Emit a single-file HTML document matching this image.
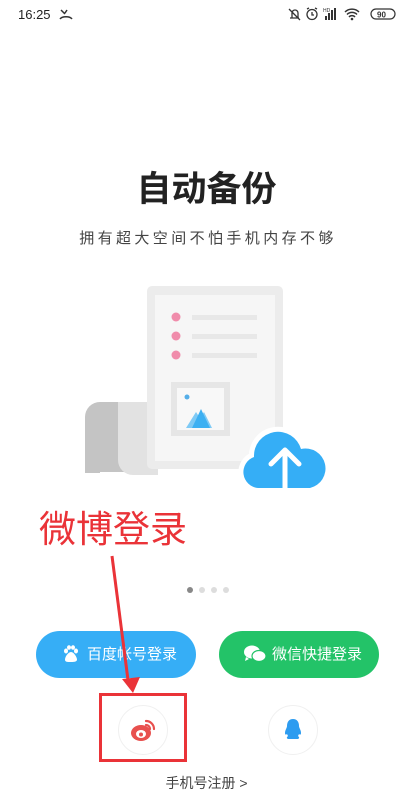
<!DOCTYPE html>
<html><head><meta charset="utf-8"><style>
*{margin:0;padding:0;box-sizing:border-box}
body{width:413px;height:805px;background:#fff;position:relative;overflow:hidden;font-family:"Liberation Sans","Noto Sans CJK SC",sans-serif}
.a{position:absolute}
</style></head><body>
<div class="a" style="left:18px;top:7px;font-size:13px;color:#222">16:25</div>
<svg class="a" style="left:58px;top:8px" width="16" height="14" viewBox="0 0 16 14"><path d="M3 2l4 4M9 2l-2 3M2 11c2-3 10-3 12 0" stroke="#333" stroke-width="1.5" fill="none"/></svg>
<svg class="a" style="left:287px;top:6px" width="110" height="16" viewBox="0 0 110 16">
<g stroke="#333" stroke-width="1.3" fill="none"><path d="M3 12h9M5 12V7a3 3 0 016 0v5M2 3l11 11"/><circle cx="25" cy="8.5" r="5"/><path d="M25 6v3h2M20 3l2-1M30 3l-2-1"/></g>
<g fill="#333"><rect x="38" y="10" width="2" height="4"/><rect x="41" y="7" width="2" height="7"/><rect x="44" y="4" width="2" height="10"/><rect x="47" y="2" width="2" height="12"/></g>
<text x="36" y="6" font-size="5" fill="#333">HD</text>
<path d="M58 6a10 10 0 0114 0M60 8.5a7 7 0 0110 0M62 11a4 4 0 016 0" stroke="#333" stroke-width="1.5" fill="none"/><circle cx="65" cy="13" r="1.3" fill="#333"/>
<rect x="84" y="3" width="24" height="10" rx="5" stroke="#333" stroke-width="1.2" fill="none"/><text x="90" y="11.5" font-size="8" font-weight="bold" fill="#333">90</text>
</svg>
<div class="a" style="left:0;width:413px;top:167px;text-align:center;font-size:35px;font-weight:bold;color:#222;line-height:46px">自动备份</div>
<div class="a" style="left:0;width:413px;top:228px;text-align:center;font-size:15px;letter-spacing:3.4px;padding-left:3px;color:#444;line-height:22px">拥有超大空间不怕手机内存不够</div>
<svg class="a" style="left:80px;top:280px" width="260" height="215" viewBox="80 280 260 215">
<path d="M100 402h50v70h-50z" fill="#c4c4c4"/><path d="M100 402a15 15 0 00-15 15v56h15z" fill="#c4c4c4"/>
<path d="M118 402h40v73h-25a15 15 0 01-15-15z" fill="#e2e2e2"/>
<rect x="147" y="286" width="136" height="183" rx="5" fill="#ececec"/>
<rect x="155" y="295" width="120" height="166" fill="#f6f6f6"/>
<circle cx="176" cy="317" r="4.5" fill="#f08cab"/><circle cx="176" cy="336" r="4.5" fill="#f08cab"/><circle cx="176" cy="355" r="4.5" fill="#f08cab"/>
<rect x="192" y="315" width="65" height="5" fill="#e8e8e8"/><rect x="192" y="334" width="65" height="5" fill="#e8e8e8"/><rect x="192" y="353" width="65" height="5" fill="#e8e8e8"/>
<rect x="171" y="382" width="59" height="54" fill="#e6e6e6"/><rect x="177" y="388" width="47" height="42" fill="#f8f8f8"/>
<circle cx="187" cy="397" r="2.5" fill="#55aee8"/>
<path d="M186 428l10-16 4 6 4-6 8 16z" fill="#7fcaf5"/><path d="M192 428l9-19 9 19z" fill="#3db0f2"/>
<path d="M258 488a16 16 0 01-4-31 24 24 0 0147-8 18 18 0 019 39z" fill="#35aef6" stroke="#fff" stroke-width="10" paint-order="stroke"/>
<path d="M285 488v-38M271 464l14-14 14 14" stroke="#fff" stroke-width="5" fill="none" stroke-linecap="round" stroke-linejoin="round"/>
</svg>
<div class="a" style="left:39px;top:505px;font-size:37px;color:#ea3338;line-height:50px;letter-spacing:0">微博登录</div>
<div class="a" style="left:187px;top:587px;width:6px;height:6px;border-radius:3px;background:#888"></div>
<div class="a" style="left:199px;top:587px;width:6px;height:6px;border-radius:3px;background:#ddd"></div>
<div class="a" style="left:211px;top:587px;width:6px;height:6px;border-radius:3px;background:#ddd"></div>
<div class="a" style="left:223px;top:587px;width:6px;height:6px;border-radius:3px;background:#ddd"></div>
<div class="a" style="left:36px;top:631px;width:160px;height:47px;border-radius:24px;background:#36aef6;color:#fff;font-size:15px;line-height:47px;padding-left:51px">百度帐号登录</div>
<svg class="a" style="left:63px;top:645px" width="16" height="18" viewBox="0 0 16 18" fill="#fff"><ellipse cx="3" cy="6" rx="2" ry="2.5"/><ellipse cx="6" cy="2.5" rx="2" ry="2.3"/><ellipse cx="10" cy="2.5" rx="2" ry="2.3"/><ellipse cx="13" cy="6" rx="2" ry="2.5"/><path d="M8 7c-3 0-6 5-6 7.5S4 17 8 17s6-.5 6-2.5S11 7 8 7z"/></svg>
<div class="a" style="left:219px;top:631px;width:160px;height:47px;border-radius:24px;background:#23c368;color:#fff;font-size:15px;line-height:47px;padding-left:53px">微信快捷登录</div>
<svg class="a" style="left:243px;top:645px" width="24" height="18" viewBox="0 0 24 18" fill="#fff"><ellipse cx="9" cy="7" rx="8" ry="6.5"/><path d="M3 12l-1 4 4-2z"/><ellipse cx="16" cy="11" rx="7" ry="5.5" stroke="#23c368" stroke-width="1.2"/></svg>
<svg class="a" style="left:0;top:545px" width="160" height="160" viewBox="0 545 160 160"><path d="M112 556L128 680" stroke="#ea3338" stroke-width="3"/><path d="M122 679l11 14 7-16z" fill="#ea3338"/></svg>
<div class="a" style="left:99px;top:693px;width:88px;height:69px;border:3px solid #ea3338"></div>
<div class="a" style="left:118px;top:705px;width:50px;height:50px;border-radius:25px;border:1px solid #f0f0f0"></div>
<svg class="a" style="left:130px;top:717px" width="28" height="26" viewBox="0 0 28 26"><ellipse cx="11" cy="16" rx="10" ry="8" fill="#e8504e"/><ellipse cx="11" cy="17" rx="5" ry="4" fill="#fff"/><circle cx="11" cy="17.5" r="2" fill="#e8504e"/><path d="M16 4a8 8 0 018 8M16 8a4 4 0 014 4" stroke="#e8504e" stroke-width="2.2" fill="none" stroke-linecap="round"/></svg>
<div class="a" style="left:268px;top:705px;width:50px;height:50px;border-radius:25px;border:1px solid #f0f0f0"></div>
<svg class="a" style="left:284px;top:718px" width="18" height="24" viewBox="0 0 18 24" fill="#2d9cf0"><path d="M9 1c-4 0-6 3-6 7 0 2-2 4-2 7 0 2 1 2 2 1l1 2c-1 1-2 2 0 3h10c2-1 1-2 0-3l1-2c1 1 2 1 2-1 0-3-2-5-2-7 0-4-2-7-6-7z"/></svg>
<div class="a" style="left:0;width:413px;top:773px;text-align:center;font-size:14px;color:#444;line-height:20px">手机号注册 &gt;</div>
</body></html>
